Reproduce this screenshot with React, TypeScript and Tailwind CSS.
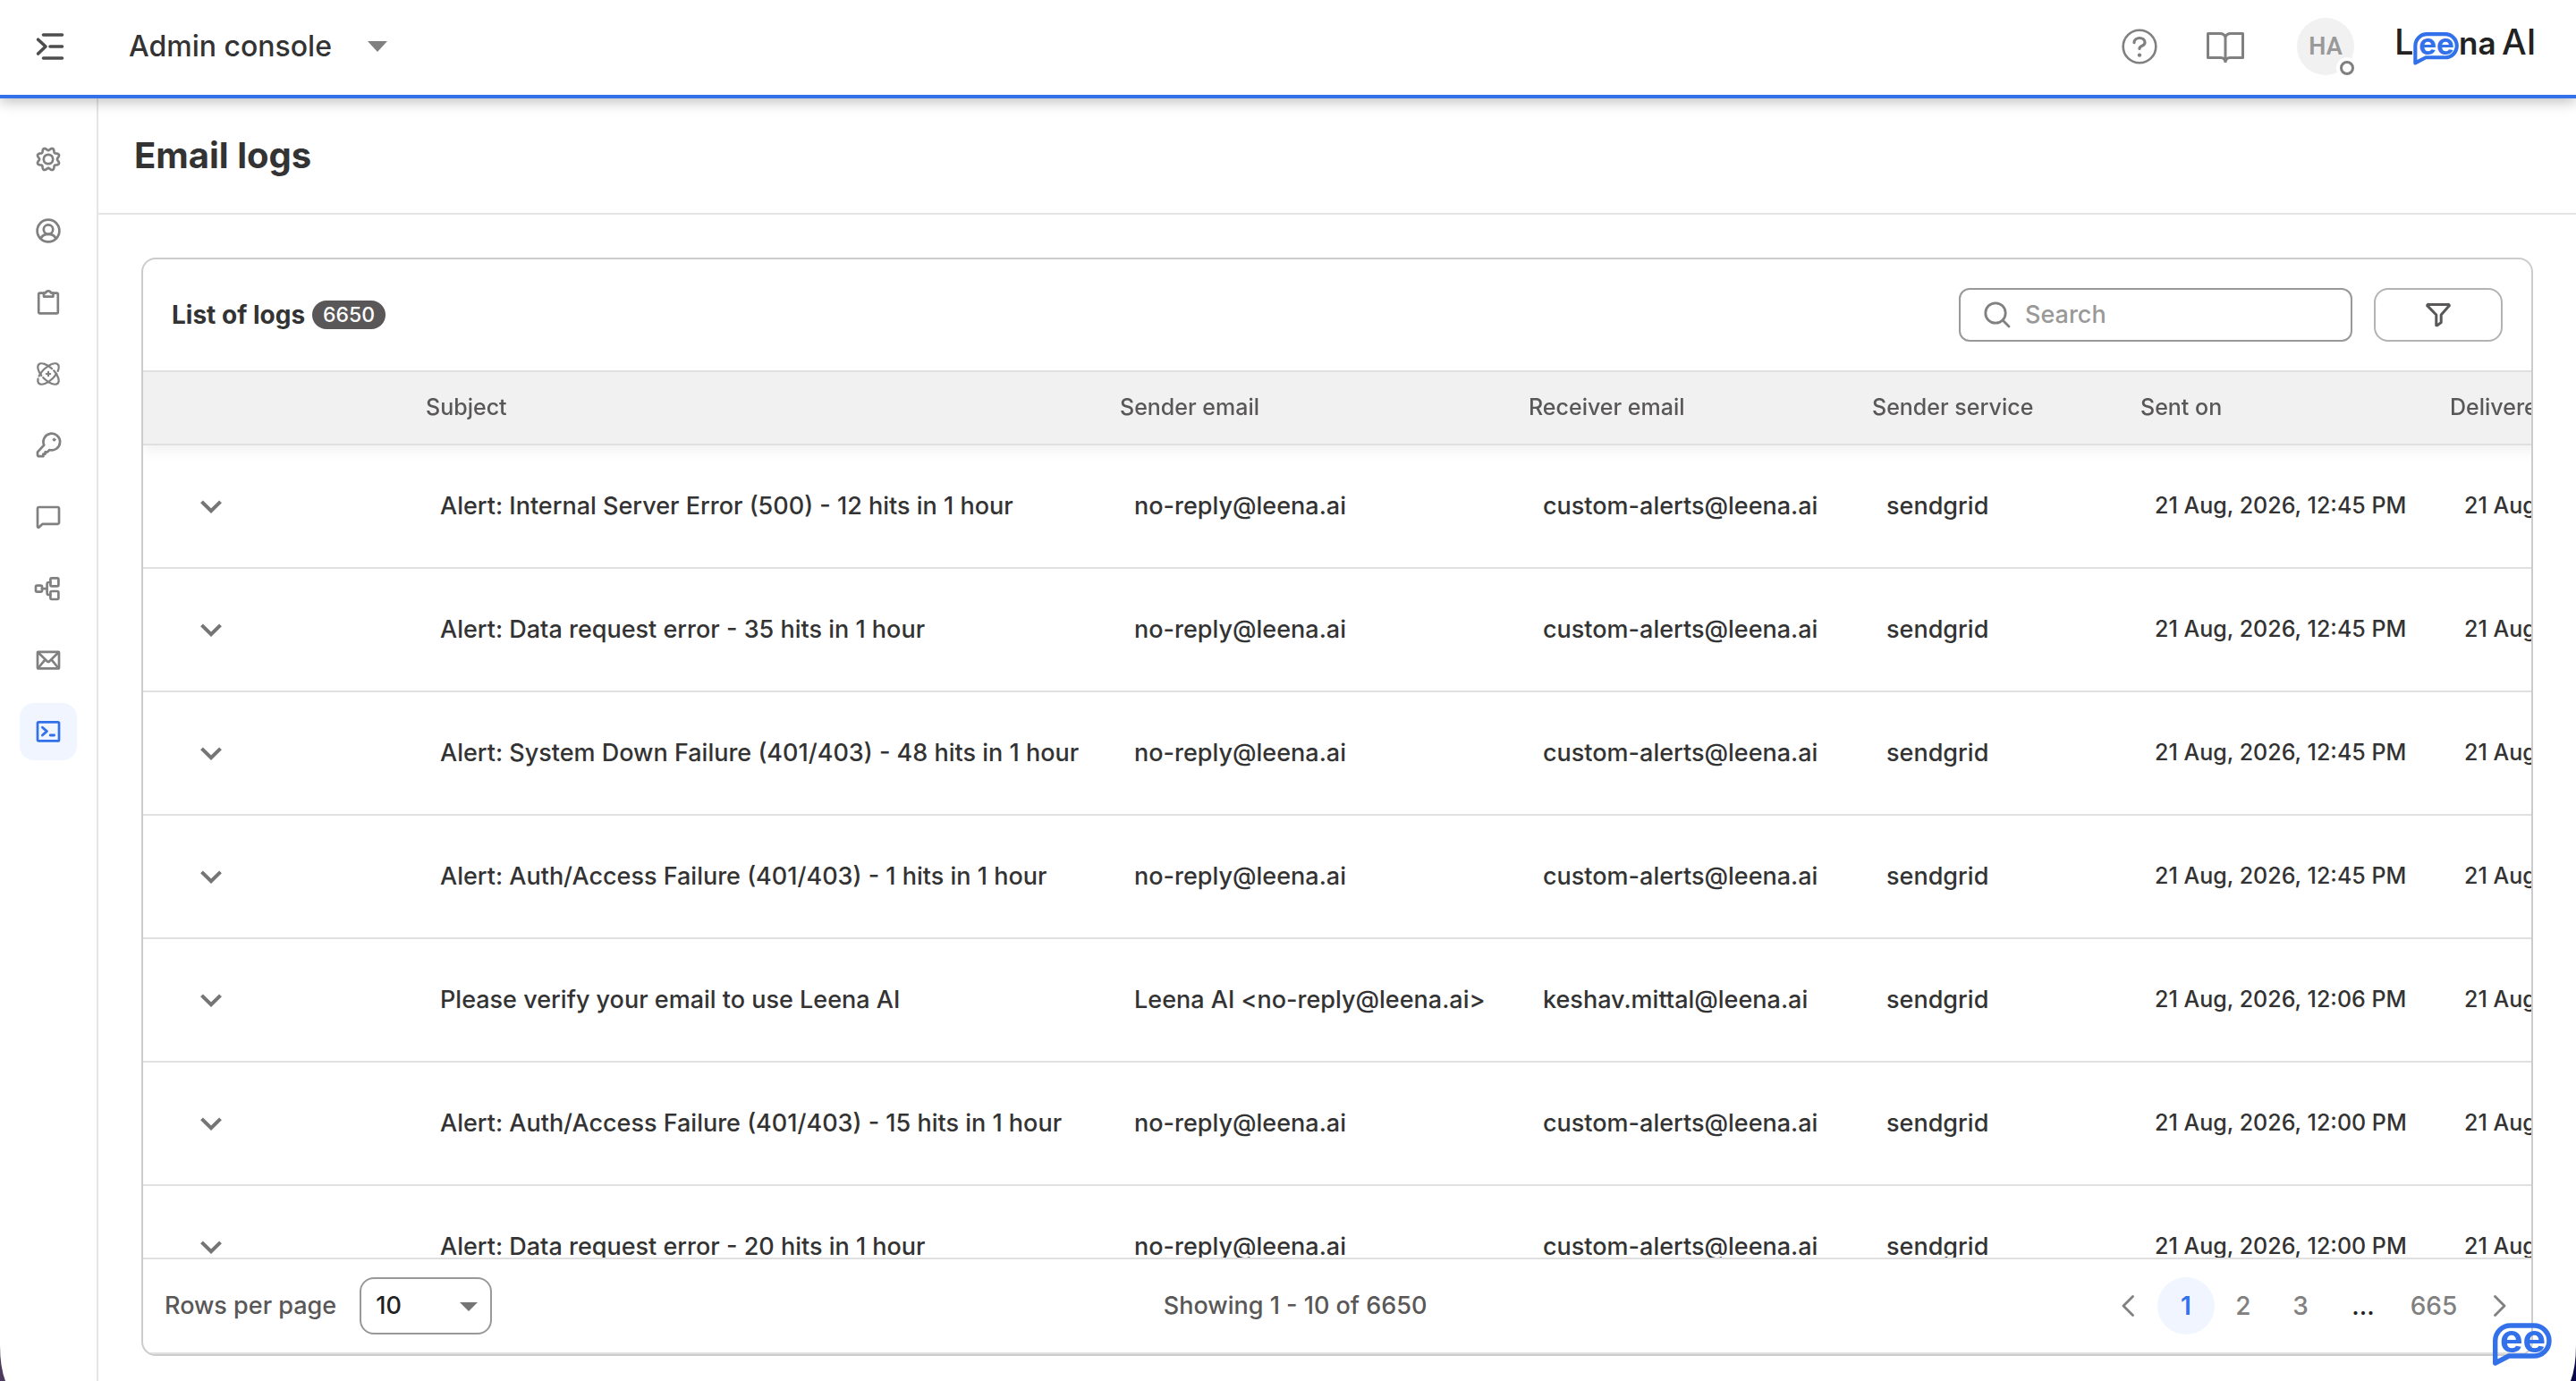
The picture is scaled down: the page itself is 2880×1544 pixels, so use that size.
import { ReactNode } from "react";

interface Log {
  subject: string;
  sender: string;
  receiver: string;
  service: string;
  sentOn: string;
}

const NO_REPLY = "no-reply@leena.ai";
const ALERTS = "custom-alerts@leena.ai";

const logs: Log[] = [
  { subject: "Alert: Internal Server Error (500) - 12 hits in 1 hour", sender: NO_REPLY, receiver: ALERTS, service: "sendgrid", sentOn: "21 Aug, 2026, 12:45 PM" },
  { subject: "Alert: Data request error - 35 hits in 1 hour", sender: NO_REPLY, receiver: ALERTS, service: "sendgrid", sentOn: "21 Aug, 2026, 12:45 PM" },
  { subject: "Alert: System Down Failure (401/403) - 48 hits in 1 hour", sender: NO_REPLY, receiver: ALERTS, service: "sendgrid", sentOn: "21 Aug, 2026, 12:45 PM" },
  { subject: "Alert: Auth/Access Failure (401/403) - 1 hits in 1 hour", sender: NO_REPLY, receiver: ALERTS, service: "sendgrid", sentOn: "21 Aug, 2026, 12:45 PM" },
  { subject: "Please verify your email to use Leena AI", sender: "Leena AI <no-reply@leena.ai>", receiver: "keshav.mittal@leena.ai", service: "sendgrid", sentOn: "21 Aug, 2026, 12:06 PM" },
  { subject: "Alert: Auth/Access Failure (401/403) - 15 hits in 1 hour", sender: NO_REPLY, receiver: ALERTS, service: "sendgrid", sentOn: "21 Aug, 2026, 12:00 PM" },
  { subject: "Alert: Data request error - 20 hits in 1 hour", sender: NO_REPLY, receiver: ALERTS, service: "sendgrid", sentOn: "21 Aug, 2026, 12:00 PM" },
];

const columns = ["Subject", "Sender email", "Receiver email", "Sender service", "Sent on", "Delivered on"];

// scalloped outline with eight teeth
const gearPath =
  Array.from({ length: 96 }, (_, i) => {
    const a = (i / 96) * Math.PI * 2;
    const r = 11.4 - 1.5 * Math.cos(8 * a);
    return `${i ? "L" : "M"}${(14 + r * Math.cos(a)).toFixed(2)} ${(14 + r * Math.sin(a)).toFixed(2)}`;
  }).join("") + "Z";

const navItems: { label: string; icon: ReactNode }[] = [
  {
    label: "Settings",
    icon: (
      <>
        <path d={gearPath} />
        <circle cx="14" cy="14" r="5.2" />
      </>
    ),
  },
  {
    label: "Users",
    icon: (
      <>
        <circle cx="14" cy="14" r="12.4" />
        <circle cx="14" cy="12.6" r="5.2" />
        <path d="M5.6 22.6C8.4 16.4 19.6 16.4 22.4 22.6" />
      </>
    ),
  },
  {
    label: "Tasks",
    icon: (
      <>
        <path d="M9 3.6H4.6a1.4 1.4 0 0 0-1.4 1.4V25a1.4 1.4 0 0 0 1.4 1.4H23.4a1.4 1.4 0 0 0 1.4-1.4V5a1.4 1.4 0 0 0-1.4-1.4H19" />
        <path d="M9 7.6V3.8L11 3.4C12 .8 16 .8 17 3.4L19.4 3.8V7.6Z" />
      </>
    ),
  },
  {
    label: "Integrations",
    icon: (
      <g strokeWidth="2.2">
        <ellipse cx="14" cy="14" rx="15" ry="7" transform="rotate(45 14 14)" strokeDasharray="19 3 30 3 16 0" />
        <ellipse cx="14" cy="14" rx="15" ry="7" transform="rotate(-45 14 14)" strokeDasharray="8 3 30 3 27 0" />
        <path d="M14 11.8v4.4M11.8 14h4.4" />
      </g>
    ),
  },
  {
    label: "Access keys",
    icon: (
      <>
        <path d="M9.2 13.6A9.3 9.3 0 1 1 15.4 19L12.8 21.4H10.6V23.6H8.4V26.2H3.6A1.6 1.6 0 0 1 2 24.6V21.4Z" />
        <circle cx="20.6" cy="7.6" r="1.7" fill="currentColor" strokeWidth="0.5" />
      </>
    ),
  },
  {
    label: "Messages",
    icon: <path d="M2 4.4A1.4 1.4 0 0 1 3.4 3H24.6A1.4 1.4 0 0 1 26 4.4V20.4A1.4 1.4 0 0 1 24.6 21.8H7.6L3.6 25.4A.9.9 0 0 1 2 24.8Z" />,
  },
  {
    label: "Workflows",
    icon: (
      <>
        <rect x="0" y="10.6" width="7" height="7" rx="1.4" />
        <rect x="16.4" y="2.4" width="9" height="9" rx="1.4" />
        <rect x="16.4" y="17" width="9" height="9" rx="1.4" />
        <path d="M7 14.1H12.6M16.4 7H14.6A2 2 0 0 0 12.6 9V19A2 2 0 0 0 14.6 21H16.4" />
      </>
    ),
  },
  {
    label: "Email",
    icon: (
      <>
        <rect x="2" y="4.8" width="24" height="18.6" rx="0.6" />
        <path d="M2.4 5.2L12.8 15.4A1.8 1.8 0 0 0 15.2 15.4L25.6 5.2M2.6 23L10.4 13.6M25.4 23L17.6 13.6" />
      </>
    ),
  },
  {
    label: "Logs",
    icon: (
      <>
        <rect x="2" y="3.4" width="24" height="21" rx="1.2" />
        <path d="M7.4 9.2L12.4 13.6L7.4 18M16.2 18H20.6" strokeWidth="2.8" />
      </>
    ),
  },
];

function BubbleShape() {
  return (
    <>
      <path
        d="M3.7 46V21A17 17 0 0 1 20.7 4H47A17 17 0 0 1 47 38H19Z"
        fill="none"
        stroke="#3371eb"
        strokeWidth="5.4"
        strokeLinejoin="round"
      />
      <text x="34.5" y="33.5" textAnchor="middle" fontSize="43" fontWeight="700" fill="#3371eb">
        ee
      </text>
    </>
  );
}

function Logo() {
  return (
    <svg viewBox="0 0 160 52" className="h-[52px] w-40 shrink-0 overflow-visible" role="img" aria-label="Leena AI">
      <g fill="#222222" fontSize="40" fontWeight="500">
        <text x="-1" y="35">L</text>
        <text x="71" y="35" fontSize="35" fontWeight="600">na</text>
        <text x="119" y="35" fontSize="39">AI</text>
      </g>
      <g transform="translate(19.5 9) scale(0.77)">
        <path d="M3.7 46V21A17 17 0 0 1 20.7 4H47A17 17 0 0 1 47 38H19Z" fill="#fff" stroke="#fff" strokeWidth="9" />
        <BubbleShape />
      </g>
    </svg>
  );
}

function TopBar() {
  return (
    <header className="relative z-20 flex h-[110px] shrink-0 items-center justify-between border-b-4 border-[#3371eb] bg-white pb-0.5 pl-10 pr-[42px] shadow-[0_4px_14px_rgba(0,0,0,0.25)]">
      <div className="flex items-center">
        <button aria-label="Expand menu" className="text-[#4d4d4d]">
          <svg viewBox="0 0 32 32" className="h-8 w-8" fill="none" stroke="currentColor" strokeWidth="3.6" strokeLinecap="round" strokeLinejoin="round">
            <path d="M8.5 3H29.5M16 16H29.5M8.5 29H29.5M2.6 8.2L11 16L2.6 24" />
          </svg>
        </button>
        <button className="ml-[72px] flex items-center gap-10 text-[32px] font-medium text-[#333333]">
          Admin console
          <svg viewBox="0 0 22 12" className="h-3 w-[22px]" fill="#808080">
            <path d="M0 0H22L11 12Z" />
          </svg>
        </button>
      </div>

      <div className="flex items-center">
        <button aria-label="Help" className="text-[#808080]">
          <svg viewBox="0 0 40 40" className="h-10 w-10" fill="none" stroke="currentColor" strokeWidth="2.6" strokeLinecap="round">
            <circle cx="20" cy="20" r="18.3" />
            <path d="M14 15.6C14.3 8.8 26 8.8 26 15.8C26 20 20 18.6 20 22.4" strokeWidth="3.2" />
            <circle cx="20" cy="29.6" r="2.2" fill="currentColor" stroke="none" />
          </svg>
        </button>
        <button aria-label="Documentation" className="ml-[54px] text-[#808080]">
          <svg viewBox="0 0 44 36" className="h-9 w-11" fill="none" stroke="currentColor" strokeWidth="3" strokeLinejoin="round">
            <path d="M22 7.5C21 4.5 19 3.5 16 3.5H2.5V30.5H17C20 30.5 21.5 32 22 35.5C22.5 32 24 30.5 27 30.5H41.500V3.5H28C25 3.5 23 4.5 22 7.5V35.5" />
          </svg>
        </button>
        <button className="relative ml-[58px] h-16 w-16 rounded-full bg-[#f1f1f1] font-['Roboto',sans-serif] text-[27px] font-semibold text-[#999999]">
          HA
          <span className="absolute -bottom-1 -right-1 flex h-6 w-6 items-center justify-center rounded-full bg-white">
            <span className="h-4 w-4 rounded-full border-[3px] border-[#808080]" />
          </span>
        </button>
        <a href="#home" className="ml-[46px]">
          <Logo />
        </a>
      </div>
    </header>
  );
}

function Sidebar() {
  return (
    <nav className="flex w-[110px] shrink-0 flex-col items-center gap-4 border-r-2 border-[#e5e5e5] bg-white pt-9">
      {navItems.map((item) => (
        <a
          key={item.label}
          href={`#${item.label.toLowerCase().replace(" ", "-")}`}
          aria-label={item.label}
          className={`flex h-16 w-16 items-center justify-center rounded-2xl ${
            item.label === "Logs" ? "bg-[#f0f5ff] text-[#3371eb]" : "text-[#808080]"
          }`}
        >
          <svg viewBox="0 0 28 28" className="h-7 w-7 overflow-visible" fill="none" stroke="currentColor" strokeWidth="2.7" strokeLinecap="round" strokeLinejoin="round">
            {item.icon}
          </svg>
        </a>
      ))}
    </nav>
  );
}

function Toolbar() {
  return (
    <div className="flex h-[126px] shrink-0 items-center justify-between border-b-2 border-[#e0e0e0] px-8">
      <div className="flex items-center gap-2">
        <h2 className="text-[28px] font-bold text-[#333333]">List of logs</h2>
        <span className="flex h-8 items-center rounded-full bg-[#595757] px-3 text-[23px] font-medium text-white">6650</span>
      </div>
      <div className="flex items-center gap-6">
        <label className="flex h-[60px] w-[440px] items-center gap-4 rounded-xl border-2 border-[#999999] px-[26px]">
          <svg viewBox="0 0 30 30" className="h-[30px] w-[30px] shrink-0" fill="none" stroke="#808080" strokeWidth="2.8" strokeLinecap="round">
            <circle cx="13" cy="13" r="11.2" />
            <path d="M21.3 21.3L28 28" />
          </svg>
          <input
            type="text"
            aria-label="Search"
            placeholder="Search"
            className="min-w-0 flex-1 text-[27px] font-medium outline-none placeholder:text-[#999999]"
          />
        </label>
        <button aria-label="Filter" className="flex h-[60px] w-36 items-center justify-center rounded-2xl border-2 border-[#b3b3b3] text-[#595757]">
          <svg viewBox="0 0 28 28" className="h-7 w-7" fill="none" stroke="currentColor" strokeWidth="3" strokeLinejoin="round">
            <path d="M3.4 2.4H24.6A1 1 0 0 1 25.6 4.4L17.2 14V22.6L12.800 25.8H11.8V14L2.4 4.4A1 1 0 0 1 3.4 2.4Z" />
          </svg>
        </button>
      </div>
    </div>
  );
}

function LogTable() {
  return (
    <div className="min-h-0 flex-1 overflow-auto [scrollbar-width:none]">
      <table className="w-full min-w-[2910px] table-fixed border-separate border-spacing-0 text-left">
        <colgroup>
          <col className="w-[300px]" />
          <col className="w-[776px]" />
          <col className="w-[457px]" />
          <col className="w-[384px]" />
          <col className="w-[300px]" />
          <col className="w-[346px]" />
          <col />
        </colgroup>
        <thead className="sticky top-0 z-10 bg-[#f1f1f1] shadow-[0_4px_16px_rgba(0,0,0,0.07)]">
          <tr>
            <td className="h-[82px] border-b-2 border-[#e0e0e0]" />
            {columns.map((c) => (
              <th key={c} scope="col" className="h-[82px] whitespace-nowrap border-b-2 border-[#e0e0e0] px-4 text-[25px] font-medium text-[#595757]">
                {c}
              </th>
            ))}
          </tr>
        </thead>
        <tbody>
          {logs.map((log, i) => (
            <tr key={i} className="text-[27px] font-medium text-[#333333] *:h-[138px] *:whitespace-nowrap *:border-b-2 *:border-[#e0e0e0] *:px-8">
              <td>
                <button aria-label="Expand row" className="ml-7 flex h-8 w-8 items-center justify-center">
                  <svg viewBox="0 0 24 15" className="h-[15px] w-6" fill="none" stroke="#757575" strokeWidth="4">
                    <path d="M1.5 1.8L12 12.2L22.5 1.8" />
                  </svg>
                </button>
              </td>
              <td>{log.subject}</td>
              <td>{log.sender}</td>
              <td>{log.receiver}</td>
              <td>{log.service}</td>
              <td className="text-[25px]">{log.sentOn}</td>
              <td className="text-[25px]">{log.sentOn}</td>
            </tr>
          ))}
        </tbody>
      </table>
    </div>
  );
}

function Pagination() {
  const page = "h-16 w-16 rounded-full";
  return (
    <div className="flex items-center text-[28px] font-medium text-[#808080]">
      <button aria-label="Previous page" className="flex h-16 w-[66px] items-center justify-center">
        <svg viewBox="0 0 14 24" className="h-6 w-[14px]" fill="none" stroke="currentColor" strokeWidth="2.8" strokeLinecap="round" strokeLinejoin="round">
          <path d="M12.5 1.5L2 12L12.5 22.5" />
        </svg>
      </button>
      <button aria-current="page" className={`${page} bg-[#f0f5ff] font-semibold text-[#3371eb]`}>1</button>
      <button className={page}>2</button>
      <button className={page}>3</button>
      <span className="w-[76px] text-center text-[#222222]">...</span>
      <button className="h-16 w-[82px]">665</button>
      <button aria-label="Next page" className="flex h-16 w-[66px] items-center justify-center">
        <svg viewBox="0 0 14 24" className="h-6 w-[14px]" fill="none" stroke="currentColor" strokeWidth="2.8" strokeLinecap="round" strokeLinejoin="round">
          <path d="M1.5 1.5L12 12L1.5 22.5" />
        </svg>
      </button>
    </div>
  );
}

function TableFooter() {
  return (
    <div className="flex h-[108px] shrink-0 items-center justify-between border-y-2 border-[#e0e0e0] pl-6 pr-0.5 text-[27px] font-medium text-[#595757]">
      <div className="flex items-center gap-[26px]">
        <label htmlFor="rows-per-page">Rows per page</label>
        <div className="relative">
          <select
            id="rows-per-page"
            defaultValue="10"
            className="h-16 w-[148px] appearance-none rounded-2xl border-2 border-[#999999] bg-white pl-4 text-[#222222]"
          >
            <option>10</option>
            <option>25</option>
            <option>50</option>
          </select>
          <svg viewBox="0 0 20 10" className="pointer-events-none absolute right-4 top-7 h-[10px] w-5" fill="#757575">
            <path d="M0 0H20L10 10Z" />
          </svg>
        </div>
      </div>
      <p>Showing 1 - 10 of 6650</p>
      <Pagination />
    </div>
  );
}

export default function App() {
  return (
    <div className="flex h-screen flex-col overflow-hidden bg-white font-['Inter',sans-serif]">
      <TopBar />
      <div className="flex min-h-0 flex-1">
        <Sidebar />
        <main className="flex min-w-0 flex-1 flex-col">
          <div className="flex h-[130px] shrink-0 items-center border-b-2 border-[#e5e5e5] px-10">
            <h1 className="text-[40px] font-bold text-[#333333]">Email logs</h1>
          </div>
          <div className="flex min-h-0 flex-1 flex-col px-12 pb-7 pt-12">
            <section className="flex min-h-0 flex-1 flex-col overflow-hidden rounded-2xl border-2 border-[#cccccc]">
              <Toolbar />
              <LogTable />
              <TableFooter />
            </section>
          </div>
        </main>
      </div>

      <button aria-label="Open assistant" className="fixed bottom-4 right-[26px] z-30">
        <svg viewBox="0 0 68 50" className="h-[50px] w-[68px]">
          <BubbleShape />
        </svg>
      </button>

      {/* desktop showing behind the rounded window corners */}
      <svg viewBox="0 0 8 44" className="fixed bottom-0 left-0 h-11 w-2" fill="#4d3a5c">
        <path d="M0 4Q0 28 6 44H0Z" />
      </svg>
      <svg viewBox="0 0 8 44" className="fixed bottom-0 right-0 h-11 w-2" fill="#07074a">
        <path d="M8 4Q8 28 2 44H8Z" />
      </svg>
    </div>
  );
}
